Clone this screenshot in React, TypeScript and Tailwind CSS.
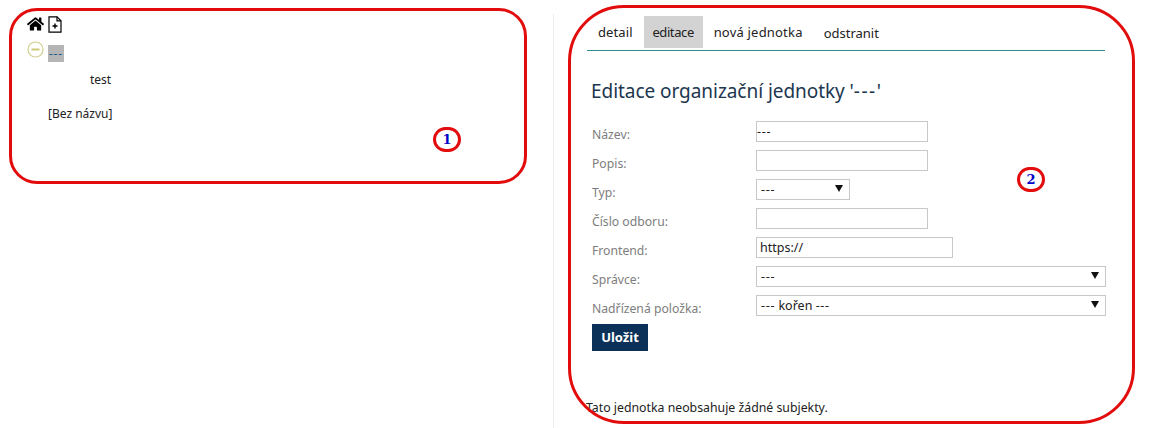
import type { ReactNode } from "react"
import { FaHome } from "react-icons/fa"

const font = { fontFamily: '"Noto Sans", sans-serif' }

function Dashes() {
  return <span className="tracking-[0.7px]">---</span>
}

function Row({ label, children }: { label: string; children: ReactNode }) {
  return (
    <div className="flex items-start h-[29px]">
      <label className="w-[164px] shrink-0 pt-[4px] text-[12.2px] leading-[20px] text-[#7d7d7d]">{label}</label>
      {children}
    </div>
  )
}

function TextBox({ value, className }: { value?: ReactNode; className: string }) {
  return (
    <div className={`h-[21px] border border-[#c8c8c8] text-[12.5px] leading-[19px] text-[#222] ${className}`}>
      {value}
    </div>
  )
}

function SelectBox({ value, className }: { value: ReactNode; className: string }) {
  return (
    <div className={`h-[21px] border border-[#c8c8c8] pl-[4px] pr-[6px] flex items-center justify-between text-[12.5px] leading-[19px] text-[#222] ${className}`}>
      <span>{value}</span>
      <svg width="8" height="8" viewBox="0 0 8 8" className="mb-[3px]">
        <path d="M0 1h8L4 8z" fill="#111" />
      </svg>
    </div>
  )
}

export default function App() {
  return (
    <div className="relative w-[1152px] h-[428px] bg-white overflow-hidden flex" style={font}>
      {/* Tree */}
      <div className="w-[553px] shrink-0 pl-[27px] pt-[16px] text-[12px] text-[#222]">
        <div className="flex items-start gap-[4px] h-[25px]">
          <FaHome className="w-[17px] h-[16px] text-black" />
          <svg width="14" height="17" viewBox="0 0 14 17" fill="none" stroke="#000" strokeWidth="1.2">
            <path d="M1 .8h8l4 4v11.4H1z" />
            <path d="M9 .8v4h4" />
            <path d="M7 7.5v5M4.5 10h5" strokeWidth="1.4" />
          </svg>
        </div>
        <div className="flex items-start">
          <svg width="17" height="17" viewBox="0 0 17 17" fill="none" className="shrink-0">
            <circle cx="8.5" cy="8.5" r="7.5" stroke="#d0cf8f" strokeWidth="1.2" />
            <path d="M4.5 8.5h8" stroke="#cfc97a" strokeWidth="2" />
          </svg>
          <span className="mt-[4px] ml-[4px] w-[16px] h-[17px] pl-[1px] bg-[#b5b5b5] text-[#1e5a8a] text-[12px] leading-[17px] tracking-[0.7px] whitespace-nowrap">---</span>
        </div>
        <p className="ml-[63px] mt-[9px] leading-[17px]">test</p>
        <p className="ml-[21px] mt-[17px] leading-[17px]">[Bez názvu]</p>
      </div>

      {/* Detail */}
      <div className="flex-1 mt-[14px] border-l border-[#ececec] pl-[33px] pr-[46px] pt-[2px] flex flex-col">
        <nav className="flex items-start h-[35px] border-b border-[#2f8a94] w-[518px] text-[13px] text-[#222]">
          <a className="h-[32px] pl-[11px] pr-[11px] leading-[32px] tracking-[0.1px]">detail</a>
          <a className="h-[32px] w-[59px] text-center leading-[32px] tracking-[-0.4px] bg-[#d3d3d3]">editace</a>
          <a className="h-[32px] px-[11px] leading-[32px] tracking-[0.2px]">nová jednotka</a>
          <a className="h-[32px] px-[10px] leading-[34px]">odstranit</a>
        </nav>
        <div className="pl-[5px]">
          <h1 className="mt-[26px] -ml-[1px] h-[35px] text-[19px] leading-[28px] text-[#20364f] tracking-[-0.05px]">
            Editace organizační jednotky '<span className="tracking-[1.5px]">---</span>'
          </h1>
          <div className="mt-[9px]">
            <Row label="Název:"><TextBox value={<Dashes />} className="w-[172px]" /></Row>
            <Row label="Popis:"><TextBox className="w-[172px]" /></Row>
            <Row label="Typ:"><SelectBox value={<Dashes />} className="w-[94px]" /></Row>
            <Row label="Číslo odboru:"><TextBox className="w-[172px]" /></Row>
            <Row label="Frontend:"><TextBox value="https://" className="w-[197px] pl-[3px]" /></Row>
            <Row label="Správce:"><SelectBox value={<Dashes />} className="w-[350px]" /></Row>
            <Row label="Nadřízená položka:"><SelectBox value={<><Dashes /> kořen <Dashes /></>} className="w-[350px]" /></Row>
          </div>
          <button className="block w-[56px] h-[27px] bg-[#0b3158] text-white text-[13px] font-bold">Uložit</button>
        </div>
        <p className="mt-[48px] -ml-[1px] text-[12.3px] leading-[18px] text-[#222]">Tato jednotka neobsahuje žádné subjekty.</p>
      </div>

      {/* Annotations over the screenshot */}
      <div className="absolute left-[9px] top-[8px] w-[518px] h-[176px] border-[3px] border-[#e20c0c] rounded-[28px] pointer-events-none" />
      <div className="absolute left-[568px] top-[5px] w-[567px] h-[419px] border-[3px] border-[#e20c0c] rounded-[56px] pointer-events-none" />
      <div className="absolute left-[433px] top-[127px] w-[28px] h-[25px] border-[3px] border-[#e20c0c] rounded-full flex items-center justify-center text-[13px] font-bold text-[#0000c8]" style={{ fontFamily: '"DejaVu Serif", serif' }}>1</div>
      <div className="absolute left-[1017px] top-[167px] w-[28px] h-[25px] border-[3px] border-[#e20c0c] rounded-full flex items-center justify-center text-[13px] font-bold text-[#0000c8]" style={{ fontFamily: '"DejaVu Serif", serif' }}>2</div>
    </div>
  )
}
